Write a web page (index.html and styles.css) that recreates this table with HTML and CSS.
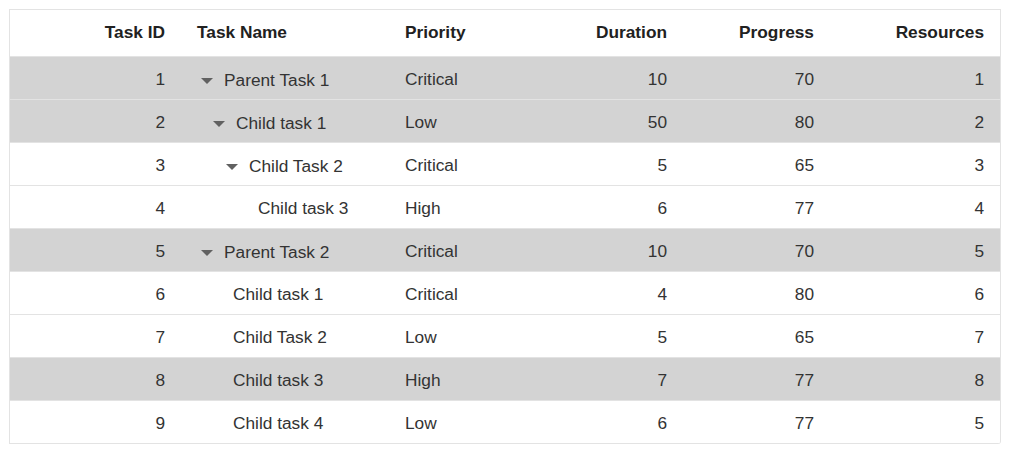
FILE: index.html
```html
<!DOCTYPE html>
<html>
<head>
<meta charset="utf-8">
<link rel="stylesheet" href="styles.css">
</head>
<body>
<div class="grid">
  <table class="tg">
    <colgroup>
      <col class="c-id"><col class="c-name"><col class="c-pri"><col class="c-dur"><col class="c-prog"><col class="c-res">
    </colgroup>
    <thead>
      <tr><th class="r">Task ID</th><th>Task Name</th><th>Priority</th><th class="r">Duration</th><th class="r">Progress</th><th class="r">Resources</th></tr>
    </thead>
    <tbody>
      <tr class="sel"><td class="r">1</td><td><span class="name l0"><span class="arrow"></span>Parent Task 1</span></td><td>Critical</td><td class="r">10</td><td class="r">70</td><td class="r">1</td></tr>
      <tr class="sel"><td class="r">2</td><td><span class="name l1"><span class="arrow"></span>Child task 1</span></td><td>Low</td><td class="r">50</td><td class="r">80</td><td class="r">2</td></tr>
      <tr><td class="r">3</td><td><span class="name l2"><span class="arrow"></span>Child Task 2</span></td><td>Critical</td><td class="r">5</td><td class="r">65</td><td class="r">3</td></tr>
      <tr><td class="r">4</td><td><span class="name leaf3">Child task 3</span></td><td>High</td><td class="r">6</td><td class="r">77</td><td class="r">4</td></tr>
      <tr class="sel"><td class="r">5</td><td><span class="name l0"><span class="arrow"></span>Parent Task 2</span></td><td>Critical</td><td class="r">10</td><td class="r">70</td><td class="r">5</td></tr>
      <tr><td class="r">6</td><td><span class="name leaf1">Child task 1</span></td><td>Critical</td><td class="r">4</td><td class="r">80</td><td class="r">6</td></tr>
      <tr><td class="r">7</td><td><span class="name leaf1">Child Task 2</span></td><td>Low</td><td class="r">5</td><td class="r">65</td><td class="r">7</td></tr>
      <tr class="sel"><td class="r">8</td><td><span class="name leaf1">Child task 3</span></td><td>High</td><td class="r">7</td><td class="r">77</td><td class="r">8</td></tr>
      <tr><td class="r">9</td><td><span class="name leaf1">Child task 4</span></td><td>Low</td><td class="r">6</td><td class="r">77</td><td class="r">5</td></tr>
    </tbody>
  </table>
</div>
</body>
</html>
```
FILE: styles.css
```css
html, body {
  margin: 0;
  padding: 0;
  background: #ffffff;
}
body {
  padding: 9px 0 0 9px;
  font-family: "Liberation Sans", Arial, sans-serif;
}
.grid {
  width: 990px;
  border: 1px solid #e3e3e3;
  border-bottom: none;
  border-radius: 0 0 3px 0;
  overflow: hidden;
}
.tg {
  width: 990px;
  border-collapse: collapse;
  table-layout: fixed;
}
.c-id { width: 171px; }
.c-name { width: 208px; }
.c-pri { width: 147px; }
.c-dur { width: 147px; }
.c-prog { width: 147px; }
.c-res { width: 170px; }
th {
  height: 46px;
  padding: 0 16px;
  font-size: 17.3px;
  font-weight: bold;
  color: #212121;
  text-align: left;
  border-bottom: 1px solid #e3e3e3;
  box-sizing: border-box;
}
td {
  height: 43px;
  padding: 4px 16px 0;
  font-size: 17.3px;
  color: #333333;
  text-align: left;
  border-bottom: 1px solid #e3e3e3;
  box-sizing: border-box;
  white-space: nowrap;
}
.r { text-align: right; }
tr.sel td { background: #d3d3d3; }
.name {
  display: inline-flex;
  align-items: center;
}
.arrow {
  width: 0;
  height: 0;
  border-left: 6.5px solid transparent;
  border-right: 6.5px solid transparent;
  border-top: 6px solid #616161;
  margin-right: 11px;
  margin-top: 1px;
}
.l0 { padding-left: 4px; }
.l1 { padding-left: 16px; }
.l2 { padding-left: 29px; }
.leaf1 { padding-left: 36px; }
.leaf3 { padding-left: 61px; }
```
